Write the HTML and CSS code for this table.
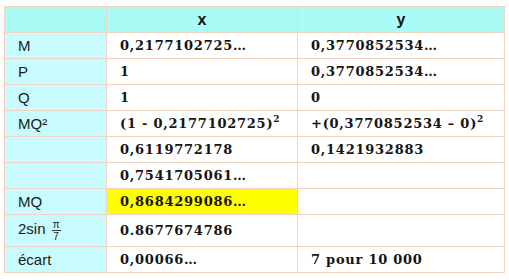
FILE: index.html
```html
<!DOCTYPE html>
<html lang="fr">
<head>
<meta charset="utf-8">
<link rel="stylesheet" href="styles.css">
</head>
<body>
<table class="grid">
  <colgroup>
    <col class="c1"><col class="c2"><col class="c3">
  </colgroup>
  <tr class="head"><th></th><th>x</th><th>y</th></tr>
  <tr><td class="lab">M</td><td class="val">0,2177102725…</td><td class="val">0,3770852534…</td></tr>
  <tr><td class="lab">P</td><td class="val">1</td><td class="val">0,3770852534…</td></tr>
  <tr><td class="lab">Q</td><td class="val">1</td><td class="val">0</td></tr>
  <tr><td class="lab">MQ²</td><td class="val">(1 - 0,2177102725)<sup>2</sup></td><td class="val">+(0,3770852534 – 0)<sup>2</sup></td></tr>
  <tr><td class="lab"></td><td class="val">0,6119772178</td><td class="val">0,1421932883</td></tr>
  <tr><td class="lab"></td><td class="val">0,7541705061…</td><td class="val"></td></tr>
  <tr><td class="lab">MQ</td><td class="val hl">0,8684299086…</td><td class="val"></td></tr>
  <tr class="tall"><td class="lab">2sin <span class="frac"><span class="num">π</span><span class="den">7</span></span></td><td class="val">0.8677674786</td><td class="val"></td></tr>
  <tr><td class="lab">écart</td><td class="val">0,00066…</td><td class="val">7 pour 10 000</td></tr>
</table>
</body>
</html>
```
FILE: styles.css
```css
html, body {
  margin: 0;
  padding: 0;
  background: #ffffff;
}
body {
  padding: 6px 0 0 4px;
}
.grid {
  border-collapse: collapse;
  table-layout: fixed;
  width: 500px;
}
.c1 { width: 102px; }
.c2 { width: 191px; }
.c3 { width: 207px; }
.grid th, .grid td {
  border: 1px solid #f1d3bf;
  height: 26px;
  padding: 0 0 0 13px;
  box-sizing: border-box;
  vertical-align: middle;
  white-space: nowrap;
}
.head th {
  background: #a9fbf6;
  font-family: "Liberation Sans", Arial, sans-serif;
  font-weight: bold;
  font-size: 16px;
  text-align: center;
  padding: 0;
  color: #111;
}
.lab {
  background: #c8fbfd;
  font-family: "Liberation Sans", Arial, sans-serif;
  font-size: 15px;
  color: #1a1a1a;
}
.val {
  font-family: "DejaVu Serif", serif;
  font-weight: bold;
  font-size: 13px;
  letter-spacing: 0.75px;
  color: #151515;
}
.val sup {
  font-size: 9px;
  line-height: 0;
  vertical-align: 6px;
  letter-spacing: 0;
}
.hl {
  background: #ffff00;
}
.grid .tall td {
  height: 32px;
}
.frac {
  display: inline-flex;
  flex-direction: column;
  align-items: center;
  vertical-align: middle;
  font-size: 10px;
  line-height: 11px;
  margin-left: 2px;
}
.num {
  border-bottom: 1px solid #333;
  padding: 0 1px;
}
```
